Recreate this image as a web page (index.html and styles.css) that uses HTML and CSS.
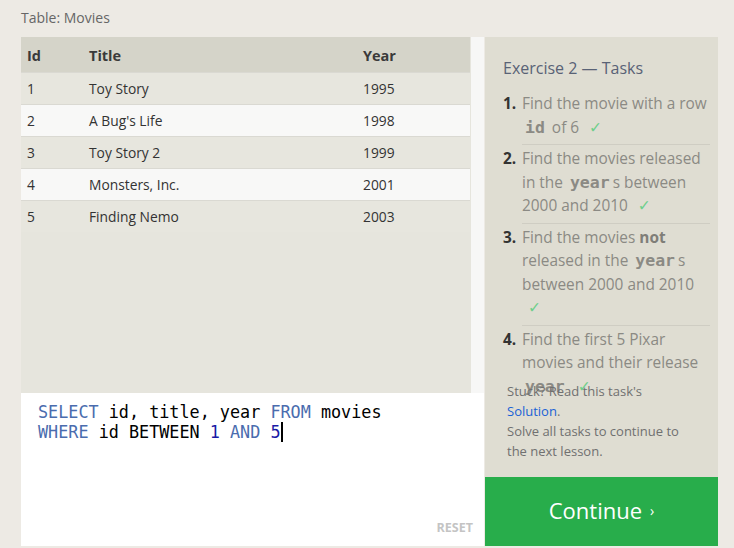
FILE: index.html
```html
<!DOCTYPE html>
<html>
<head>
<meta charset="utf-8">
<link rel="stylesheet" href="styles.css">
</head>
<body>
<div class="page">
  <div class="caption">Table: Movies</div>
  <div class="main">
    <div class="left">
      <div class="table-area">
        <div class="table-wrap">
          <table class="movies">
            <thead>
              <tr><th class="c-id">Id</th><th class="c-title">Title</th><th class="c-year">Year</th></tr>
            </thead>
            <tbody>
              <tr><td>1</td><td>Toy Story</td><td>1995</td></tr>
              <tr><td>2</td><td>A Bug's Life</td><td>1998</td></tr>
              <tr><td>3</td><td>Toy Story 2</td><td>1999</td></tr>
              <tr><td>4</td><td>Monsters, Inc.</td><td>2001</td></tr>
              <tr><td>5</td><td>Finding Nemo</td><td>2003</td></tr>
            </tbody>
          </table>
        </div>
        <div class="scroll-strip"></div>
      </div>
      <div class="editor">
        <div class="code"><span class="kw">SELECT</span> id, title, year <span class="kw">FROM</span> movies
<span class="kw">WHERE</span> id BETWEEN <span class="num">1</span> <span class="kw">AND</span> <span class="num">5</span><span class="cursor"></span></div>
        <div class="reset">RESET</div>
      </div>
    </div>
    <div class="right">
      <div class="tasks">
        <div class="tasks-title">Exercise 2 — Tasks</div>
        <ol class="task-list">
          <li><span class="n">1.</span><div class="t">Find the movie with a row <code>id</code> of 6 <span class="check">✓</span></div></li>
          <li><span class="n">2.</span><div class="t">Find the movies released in the <code>year</code>s between 2000 and 2010 <span class="check">✓</span></div></li>
          <li><span class="n">3.</span><div class="t">Find the movies <b>not</b> released in the <code>year</code>s between 2000 and 2010 <span class="check">✓</span></div></li>
          <li><span class="n">4.</span><div class="t">Find the first 5 Pixar movies and their release <code>year</code> <span class="check">✓</span></div></li>
        </ol>
        <div class="stuck">Stuck? Read this task's <a class="sol">Solution</a>.<br>Solve all tasks to continue to the next lesson.</div>
      </div>
      <div class="continue">Continue <span class="arrow">›</span></div>
    </div>
  </div>
</div>
</body>
</html>
```
FILE: styles.css
```css
* { box-sizing: border-box; }
html, body { margin: 0; padding: 0; }
body {
  background: #edeae4;
  font-family: "Open Sans", "DejaVu Sans", sans-serif;
  width: 734px;
  height: 548px;
  overflow: hidden;
}
.page { padding: 0 0 0 21px; }
.caption {
  height: 37px;
  font-size: 14px;
  color: #666;
  line-height: 35px;
}
.main {
  display: grid;
  grid-template-columns: 463px 233px;
  column-gap: 1px;
}
.left { display: flex; flex-direction: column; }
.table-area {
  height: 356px;
  display: flex;
  background: #e6e5dd;
}
.table-wrap { width: 449px; }
.scroll-strip {
  width: 13px;
  margin-left: 1px;
  background: #f7f7f6;
}
.movies {
  border-collapse: collapse;
  width: 100%;
  font-size: 13.8px;
  color: #333;
}
.movies th {
  background: #d5d4c9;
  height: 35px;
  text-align: left;
  font-weight: 700;
  font-size: 14.5px;
  color: #3a3a3a;
  padding: 2px 6px 0;
}
.movies td {
  height: 32px;
  padding: 0 6px;
  border-top: 1px solid #dad9d2;
}
.movies tbody tr:nth-child(odd) td { background: #e7e6de; }
.movies tbody tr:nth-child(even) td { background: #f8f8f7; }
.c-id { width: 62px; }
.c-title { width: 274px; }
.editor {
  height: 153px;
  background: #fff;
  position: relative;
  padding: 9px 0 0 17px;
}
.code {
  font-family: "DejaVu Sans Mono", monospace;
  font-size: 16.8px;
  line-height: 20px;
  white-space: pre;
  color: #000;
}
.kw { color: #4a6cae; }
.num { color: #1a1aa6; }
.cursor {
  display: inline-block;
  width: 2px;
  height: 20px;
  background: #000;
  vertical-align: top;
}
.reset {
  position: absolute;
  right: 11px;
  bottom: 10px;
  font-size: 12.5px;
  font-weight: 700;
  color: #c4c4c4;
}
.right { display: flex; flex-direction: column; }
.tasks {
  height: 440px;
  background: #dfddd2;
  padding: 20px 8px 0 18px;
  position: relative;
}
.tasks-title {
  font-size: 16px;
  color: #596276;
  line-height: 22px;
  margin-bottom: 13px;
}
.task-list {
  list-style: none;
  margin: 0;
  padding: 0;
  height: 288px;
}
.task-list li {
  display: flex;
  font-size: 15.4px;
  line-height: 23.5px;
  color: #8b8a84;
}
.task-list li + li .t { border-top: 1px solid #cfcdc3; padding-top: 2px; }
.task-list li + li .n { padding-top: 3px; }
.task-list .t { padding-bottom: 5px; flex: 1; }
.n {
  width: 19px;
  font-weight: 700;
  color: #333;
  flex: none;
}
.t b { font-weight: 700; color: #7f7e78; }
code {
  font-family: "DejaVu Sans Mono", monospace;
  font-weight: 700;
  font-size: 16.5px;
  color: #8b8a84;
  padding: 0 3px;
}
.check { color: #6fcf8c; margin-left: 6px; }
.stuck {
  position: absolute;
  left: 22px;
  top: 344px;
  width: 185px;
  font-size: 13px;
  line-height: 20px;
  color: #707070;
}
.sol { color: #1a62d6; }
.continue {
  height: 69px;
  background: #28ad4b;
  color: #fff;
  font-size: 22px;
  display: flex;
  align-items: center;
  justify-content: center;
  padding-bottom: 3px;
}
.arrow { font-size: 14px; margin-left: 8px; }
```
